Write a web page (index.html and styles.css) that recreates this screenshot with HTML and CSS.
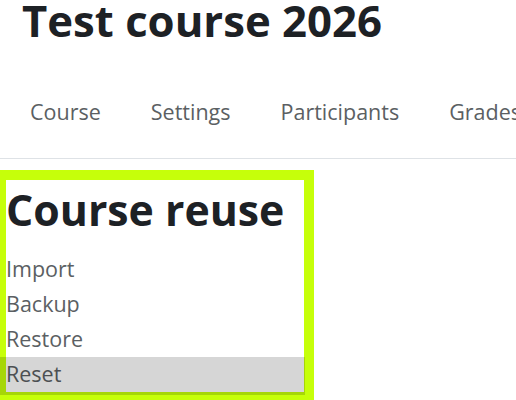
FILE: index.html
```html
<!DOCTYPE html>
<html lang="en">
<head>
<meta charset="utf-8">
<title>Test course 2026</title>
<link rel="stylesheet" href="styles.css">
</head>
<body>
<header class="page-header">
  <h1 class="course-title">Test course 2026</h1>
</header>
<nav class="secondary-nav">
  <ul class="nav-list">
    <li class="nav-item">Course</li>
    <li class="nav-item">Settings</li>
    <li class="nav-item">Participants</li>
    <li class="nav-item">Grades</li>
  </ul>
</nav>
<main class="content">
  <section class="reuse-box">
    <h2 class="reuse-title">Course reuse</h2>
    <ul class="reuse-list">
      <li class="reuse-item">Import</li>
      <li class="reuse-item">Backup</li>
      <li class="reuse-item">Restore</li>
      <li class="reuse-item">Reset</li>
    </ul>
  </section>
</main>
<div class="hover-mark"></div>
</body>
</html>
```
FILE: styles.css
```css
html, body {
  margin: 0;
  padding: 0;
  background: #ffffff;
  overflow: hidden;
}
body {
  width: 516px;
  height: 400px;
  font-family: "Open Sans", "Noto Sans", sans-serif;
  color: #1d2125;
  position: relative;
}
.page-header {
  padding: 0 0 0 22px;
}
.course-title {
  margin: 0;
  font-size: 43.7px;
  line-height: 41px;
  font-weight: 700;
}
.secondary-nav {
  border-bottom: 1px solid #dee2e6;
  margin-top: 34px;
}
.nav-list {
  list-style: none;
  margin: 0;
  padding: 0 0 0 5px;
  display: flex;
  white-space: nowrap;
}
.nav-item {
  padding: 25px 25px 34px;
  font-size: 21.5px;
  line-height: 24px;
  color: #5b5f63;
}
.content {
  padding-top: 11px;
}
.reuse-box {
  margin-left: -4px;
  width: 298px;
  border: 10px solid #c6ff0a;
  padding: 0 0 1px 0;
  background: #fff;
}
.reuse-title {
  margin: 0 0 11px;
  font-size: 42.8px;
  line-height: 60px;
  font-weight: 700;
}
.reuse-list {
  list-style: none;
  margin: 0;
  padding: 0;
}
.reuse-item {
  font-size: 21.5px;
  line-height: 35px;
  color: #5b5f63;
}
.hover-mark {
  position: absolute;
  left: 0;
  top: 357px;
  width: 305px;
  height: 38px;
  background: rgba(0, 0, 0, 0.16);
}
```
